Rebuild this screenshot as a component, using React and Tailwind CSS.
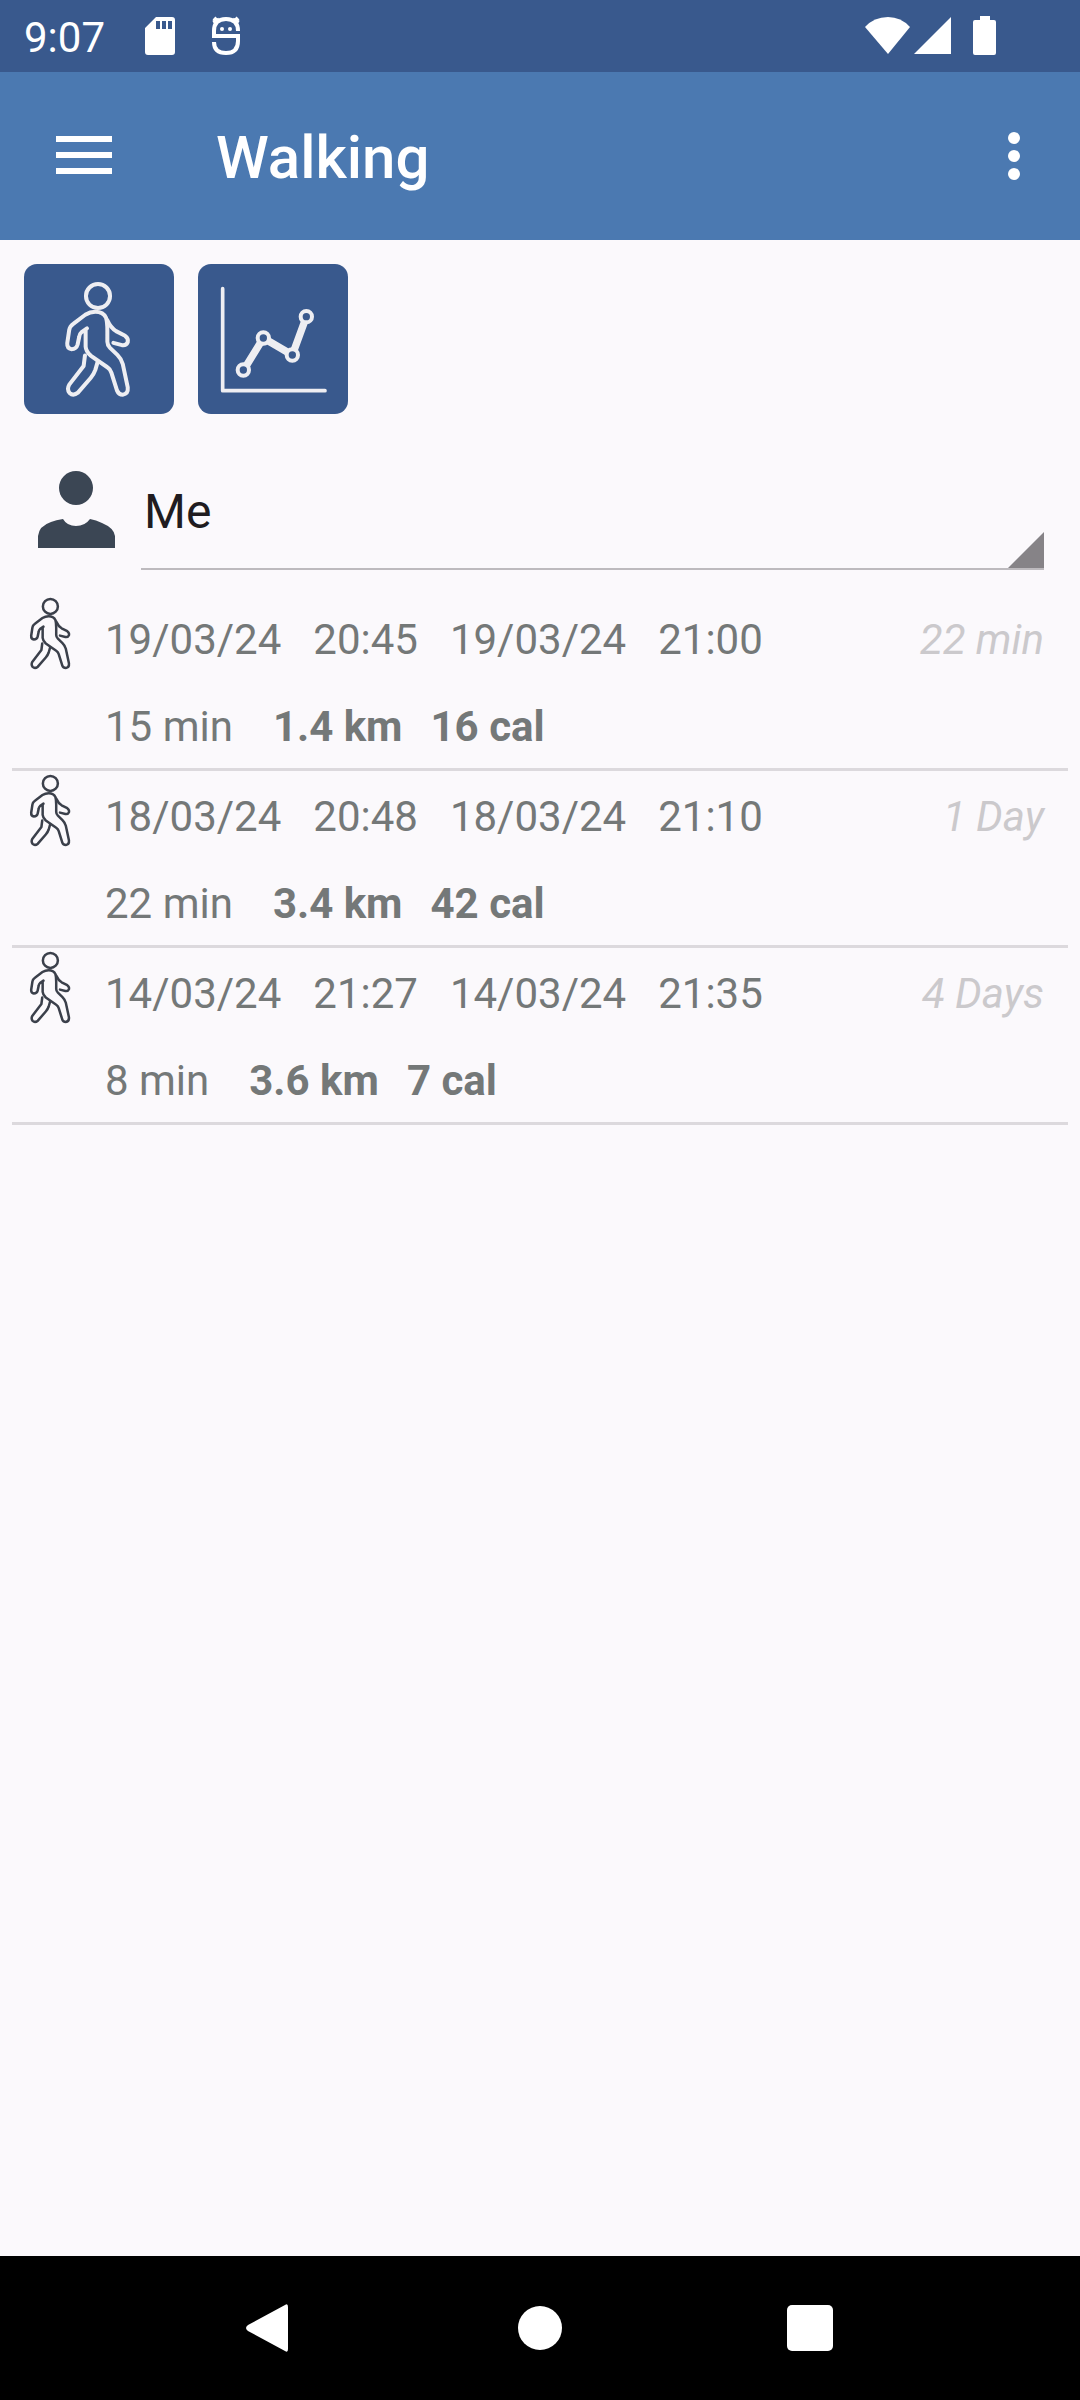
import React, { useState } from 'react';

const records = [
  { id: 1, startDate: '19/03/24', startTime: '20:45', endDate: '19/03/24', endTime: '21:00', duration: '15 min', distance: '1.4 km', calories: '16 cal', age: '22 min' },
  { id: 2, startDate: '18/03/24', startTime: '20:48', endDate: '18/03/24', endTime: '21:10', duration: '22 min', distance: '3.4 km', calories: '42 cal', age: '1 Day' },
  { id: 3, startDate: '14/03/24', startTime: '21:27', endDate: '14/03/24', endTime: '21:35', duration: '8 min', distance: '3.6 km', calories: '7 cal', age: '4 Days' },
];

const WalkIcon = ({ className }) => (
  <svg
    viewBox="187 122 220 350"
    className={className}
    fill="none"
    stroke="currentColor"
    strokeWidth="12"
    strokeLinecap="round"
    strokeLinejoin="round"
    aria-hidden="true"
  >
    <circle cx="294" cy="167" r="36" />
    <path d="M261 264 L244 276 Q239 280 238 288 L233 312 Q229 326 215 326 Q201 324 202 308 L208 268 Q210 257 220 250 L256 223 Q270 214 286 214 Q310 214 318 232 Q322 245 322 270 V304 Q322 314 330 322 L352 343 Q364 355 368 370 L383 440 Q385 460 368 462 Q356 462 351 450 L334 396 Q331 386 322 380 L272 345 Q258 332 257 318 V270" />
    <path d="M322 240 Q332 262 348 272 L375 286 Q386 294 383 305 Q378 316 366 314 L340 307" />
    <path d="M255 345 L251 376 L208 432 Q200 446 209 457 Q220 467 234 456 L272 412 Q282 400 286 388 L293 364" />
  </svg>
);

const ChartIcon = ({ className }) => (
  <svg viewBox="0 0 450 450" className={className} fill="none" stroke="currentColor" strokeLinecap="round" strokeLinejoin="round" aria-hidden="true">
    <path d="M74 74 V380 H381" strokeWidth="11" />
    <path d="M137 318 L196 222 L283 273 L325 158" strokeWidth="22" />
    <g fill="#39598d" strokeWidth="12">
      <circle cx="136" cy="318" r="17" />
      <circle cx="196" cy="222" r="17" />
      <circle cx="283" cy="273" r="17" />
      <circle cx="325" cy="158" r="17" />
    </g>
  </svg>
);

const StatusBar = () => (
  <div className="flex h-[72px] items-center bg-[#39598d] pl-6 pr-[83px] text-white">
    <span className="pt-1 text-[42px] leading-[48px]">9:07</span>
    <svg viewBox="0 0 32 40" className="ml-[39px] h-10 w-8" fill="currentColor" aria-hidden="true">
      <path fillRule="evenodd" d="M12 1 H28 Q31 1 31 4 V36 Q31 39 28 39 H4 Q1 39 1 36 V12 Z M12 5 V13 H16 V5 Z M18 5 V13 H22 V5 Z M24 5 V13 H28 V5 Z" />
    </svg>
    <svg viewBox="0 0 30 40" className="ml-[35px] h-10 w-[30px]" fill="none" stroke="currentColor" strokeWidth="4" aria-hidden="true">
      <path d="M27 15 Q27 3 15 3 Q3 3 3 15 V20 H27 V25 Q27 37 15 37 Q3 37 3 26" />
      <path d="M3 2 L7 6 M27 2 L23 6" />
      <path d="M2 6 L8 3 M28 6 L22 3" strokeWidth="3" />
      <circle cx="11" cy="13" r="2" fill="currentColor" stroke="none" />
      <circle cx="19" cy="13" r="2" fill="currentColor" stroke="none" />
    </svg>
    <svg viewBox="0 0 46 40" className="ml-auto h-10 w-[46px]" fill="currentColor" aria-hidden="true">
      <path d="M0 11 Q9 1 23 1 Q36 1 45 11 L23 38 Z" />
    </svg>
    <svg viewBox="0 0 38 40" className="ml-[3px] h-10 w-[38px]" fill="currentColor" aria-hidden="true">
      <path d="M37 1 V38 H0 Z" />
    </svg>
    <svg viewBox="0 0 24 40" className="ml-[21px] h-10 w-6" fill="currentColor" aria-hidden="true">
      <path d="M7 0 H17 V4 H21 Q23 4 23 6 V37 Q23 39 21 39 H2 Q0 39 0 37 V6 Q0 4 2 4 H7 Z" />
    </svg>
  </div>
);

const AppBar = () => (
  <header className="flex h-[168px] items-center bg-[#4b79b1] pl-12 pr-9 text-white">
    <button type="button" aria-label="Open menu" className="flex h-[74px] w-[72px] flex-col items-center justify-center gap-[10px] pb-[2px]">
      <span className="h-[6px] w-14 bg-white" />
      <span className="h-[6px] w-14 bg-white" />
      <span className="h-[6px] w-14 bg-white" />
    </button>
    <h1 className="ml-24 pt-1 text-[60px] font-medium leading-[72px]">Walking</h1>
    <button type="button" aria-label="More options" className="ml-auto flex h-[72px] w-[60px] flex-col items-center justify-center gap-[6px]">
      <span className="size-3 rounded-full bg-white" />
      <span className="size-3 rounded-full bg-white" />
      <span className="size-3 rounded-full bg-white" />
    </button>
  </header>
);

const UserSelect = () => {
  const [user, setUser] = useState('me');

  return (
    <div className="mt-[42px] flex items-center pl-[38px] pr-9">
      <label htmlFor="user" aria-label="User" className="mb-2 shrink-0 text-[#3b4654]">
        <svg viewBox="0 0 77 78" className="h-[78px] w-[77px]" fill="currentColor" aria-hidden="true">
          <circle cx="38" cy="18" r="17" />
          <path d="M0 78 V66 Q1 56 13 52 Q18 50 25 49 Q29 56 38 56 Q47 56 52 49 Q58 50 64 53 Q76 58 77 66 V78 Z" />
        </svg>
      </label>
      <div className="relative ml-[26px] flex-1">
        <select
          id="user"
          value={user}
          onChange={(e) => setUser(e.target.value)}
          className="block h-[114px] w-full appearance-none border-b-2 border-[#bdbabe] bg-transparent pl-[3px] text-[48px] text-[#201c20]"
        >
          <option value="me">Me</option>
        </select>
        <svg viewBox="0 0 36 36" className="pointer-events-none absolute bottom-[2px] right-0 size-9" fill="#868387" aria-hidden="true">
          <path d="M36 0 V36 H0 Z" />
        </svg>
      </div>
    </div>
  );
};

const RecordRow = ({ record }) => (
  <li className="flex items-start border-b-[3px] border-[#dcd9dd] pl-4 pr-6 text-[42px] leading-[56px] text-[#747878]">
    <WalkIcon className="mt-[3px] h-[73px] w-[46px] shrink-0 text-[#3b404b]" />
    <div className="ml-[31px] flex flex-1 flex-col gap-[31px] pb-[13px] pt-[18px]">
      <div className="flex gap-8">
        <span>{record.startDate}</span>
        <span>{record.startTime}</span>
        <span>{record.endDate}</span>
        <span>{record.endTime}</span>
        <span className="ml-auto italic text-[#cbc9cc]">{record.age}</span>
      </div>
      <div className="flex gap-7">
        <span className="mr-3">{record.duration}</span>
        <span className="font-bold">{record.distance}</span>
        <span className="font-bold">{record.calories}</span>
      </div>
    </div>
  </li>
);

const NavBar = () => (
  <nav className="mt-auto flex h-36 items-center justify-center gap-[198px] bg-black text-white">
    <button type="button" aria-label="Back" className="flex size-18 items-center justify-center">
      <svg viewBox="2 0 48 48" className="size-12" fill="currentColor" aria-hidden="true">
        <path d="M41 1 Q44 -1 44 3 V45 Q44 49 41 47 L4 27 Q0 24 4 21 Z" />
      </svg>
    </button>
    <button type="button" aria-label="Home" className="flex size-18 items-center justify-center">
      <span className="size-11 rounded-full bg-white" />
    </button>
    <button type="button" aria-label="Recent apps" className="flex size-18 items-center justify-center">
      <span className="size-[46px] rounded-[5px] bg-white" />
    </button>
  </nav>
);

const App = () => {
  return (
    <div className="flex min-h-screen flex-col bg-[#fbf9fc] font-[Roboto,sans-serif]">
      <StatusBar />
      <AppBar />
      <main>
        <div className="flex gap-6 px-6 pt-6">
          <button type="button" aria-label="Add walk" className="flex size-[150px] items-center justify-center rounded-[13px] bg-[#39598d] text-[#eeeef2]">
            <WalkIcon className="h-[117px] w-[74px]" />
          </button>
          <button type="button" aria-label="Chart" className="size-[150px] rounded-[13px] bg-[#39598d] text-[#eeeef2]">
            <ChartIcon className="size-full" />
          </button>
        </div>
        <UserSelect />
        <ul className="mx-3 mt-6">
          {records.map((record) => (
            <RecordRow key={record.id} record={record} />
          ))}
        </ul>
      </main>
      <NavBar />
    </div>
  );
};

export default App;
